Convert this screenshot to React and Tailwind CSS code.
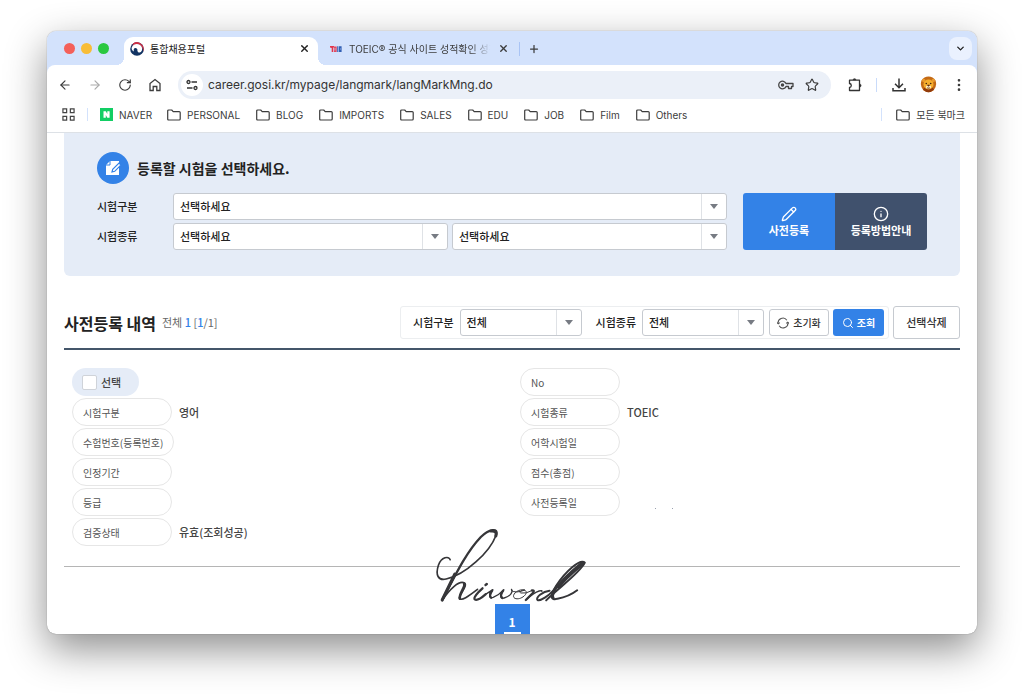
import { ArrowLeft, ArrowRight, RotateCw, Star, X, Plus, ChevronDown, Pencil, Info, Search, EllipsisVertical } from 'lucide-react'

const bookmarks = ['PERSONAL', 'BLOG', 'IMPORTS', 'SALES', 'EDU', 'JOB', 'Film', 'Others']

const leftRows = [
  { label: '시험구분', value: '영어' },
  { label: '수험번호(등록번호)' },
  { label: '인정기간' },
  { label: '등급' },
  { label: '검증상태', value: '유효(조회성공)' },
]

const rightRows = [
  { label: 'No' },
  { label: '시험종류', value: 'TOEIC' },
  { label: '어학시험일' },
  { label: '점수(총점)' },
  { label: '사전등록일', dots: true },
]

function FolderIcon() {
  return (
    <svg viewBox="0 0 14 12" className="w-[14px] h-3 shrink-0" fill="none" stroke="currentColor" strokeWidth="1.2" strokeLinejoin="round">
      <path d="M.7 10V2q0-1 1-1h3l1.500 1.600h6q1 0 1 1V10q0 1-1 1H1.700q-1 0-1-1z" />
    </svg>
  )
}

function HomeIcon() {
  return (
    <svg viewBox="0 0 14 14" className="w-[14px] h-[14px]" fill="none" stroke="currentColor" strokeWidth="1.300">
      <path d="M2 12.500V5.500L7 1.500l5 4v7H8.800V8.500H5.200v4z" />
    </svg>
  )
}

function TaegeukIcon() {
  return (
    <svg viewBox="0 0 14 14" className="w-[14px] h-[14px] shrink-0">
      <circle cx="7" cy="7" r="6.800" fill="#123463" />
      <path d="M3 1.500A6.800 6.800 0 0 1 13.300 9.500Q13 4 8.500 2.500Q5.500 1.500 2.500 4z" fill="#cf2e45" />
      <path d="M1.800 5.200Q4 1.200 8.500 2.200Q13 4 12 8.300Q10.800 11.300 8.200 10.200Q7 9 7.400 7.500Q7 5.700 5 6Q3 6.700 4 9.500Q1 8 1.800 5.200z" fill="#fff" />
    </svg>
  )
}

function ToeicIcon() {
  return (
    <svg viewBox="0 0 12 8" className="w-3 h-2 shrink-0">
      <path d="M0 1h4v1.500H3V7H1.700V3L0 2.500z" fill="#e2354b" />
      <path d="M3.700 1.500h3V7h-3z" fill="#df4a62" />
      <path d="M4.700 3h.6v2.500h-.6z" fill="#d3e2fc" />
      <path d="M7.200 1.200h1.200V7H7.200zM9 1.200h2.600V7H9z" fill="#315fb4" />
      <path d="M10.200 3h.6v2h-.6z" fill="#87a5dc" />
    </svg>
  )
}

function TuneIcon() {
  return (
    <svg viewBox="0 0 12 12" className="w-3 h-3" fill="none" stroke="#333" strokeWidth="1.300">
      <circle cx="2.500" cy="3" r="1.500" />
      <path d="M5.500 3H11M1 9h5.500" />
      <circle cx="9.500" cy="9" r="1.500" />
    </svg>
  )
}

function KeyIcon() {
  return (
    <svg viewBox="0 0 16 10" className="w-4 h-[10px]" fill="none" stroke="#444" strokeWidth="1.300" strokeLinejoin="round">
      <path d="M8 3.500A3.800 3.800 0 1 0 8 6.500h2.500v2h3v-2H15v-3z" />
      <circle cx="4.500" cy="5" r="1.100" fill="#444" />
    </svg>
  )
}

function PuzzleIcon() {
  return (
    <svg viewBox="0 0 16 16" className="w-4 h-4" fill="none" stroke="#333" strokeWidth="1.300" strokeLinejoin="round">
      <path d="M2.500 3.200h10v10.300h-10v-3q1.800-.3 1.800-2t-1.800-2z" />
      <path d="M6 3q0-1.500 1.500-1.500T9 3zM12.700 7q1.500 0 1.500 1.500t-1.500 1.500z" fill="#333" strokeWidth=".4" />
    </svg>
  )
}

function DownloadIcon() {
  return (
    <svg viewBox="0 0 16 16" className="w-4 h-4" fill="none" stroke="#333" strokeWidth="1.500">
      <path d="M8 1.500v9M4 6.700l4 4 4-4M2 11v2.700h12V11" />
    </svg>
  )
}

function LionIcon() {
  return (
    <svg viewBox="0 0 17 17" className="w-[17px] h-[17px]">
      <path d="M8.500.5Q13 .5 15.500 4.500Q17.500 10 13.500 14.500Q8.500 18 3.500 14.500Q-.5 10 1.500 4.500Q4 .5 8.500.5z" fill="#c46a16" />
      <path d="M3 13.500Q8.500 19 14 13.500L12 11H5z" fill="#923b0c" />
      <circle cx="3.700" cy="4.500" r="1.700" fill="#e99a2c" />
      <circle cx="13.300" cy="4.500" r="1.700" fill="#e99a2c" />
      <ellipse cx="8.500" cy="8.500" rx="5" ry="5" fill="#f5ae2d" />
      <ellipse cx="8.500" cy="11" rx="2.700" ry="1.800" fill="#fff0c8" />
      <circle cx="6.300" cy="7.500" r=".8" fill="#3d2410" />
      <circle cx="10.700" cy="7.500" r=".8" fill="#3d2410" />
      <path d="M7.300 9h2.400l-1.200 1.400zM7 11.800q1.500 1 3 0" fill="#5b2912" stroke="#5b2912" strokeWidth=".5" />
    </svg>
  )
}

function DocPenIcon() {
  return (
    <svg viewBox="0 0 16 16" className="w-4 h-4">
      <path d="M5 1h9v14H1V5z" fill="#fff" />
      <path d="M1 5h4V1" fill="none" stroke="#3382e7" strokeWidth="1" />
      <path d="M7 12l.7-2.700L14 3l2 2-6.300 6.300z" fill="#fff" stroke="#3382e7" strokeWidth="1.200" />
    </svg>
  )
}

function ResetIcon() {
  return (
    <svg viewBox="0 0 14 14" className="w-3 h-3" fill="none" stroke="#555" strokeWidth="1.200">
      <path d="M1.500 8A5.500 5.500 0 0 1 11.500 3.800M12.500 6A5.500 5.500 0 0 1 2.500 10.200" />
      <path d="M0 6.300L1.500 8 3.300 6.600M14 7.700L12.500 6 10.700 7.400" />
    </svg>
  )
}

function Signature() {
  return (
    <svg viewBox="45 20 465 231" className="absolute left-1/2 -translate-x-1/2 -top-10 w-[155px] h-[77px]" fill="none" stroke="#363639" strokeLinecap="round" strokeLinejoin="round" aria-hidden="true">
      <path strokeWidth="5" d="M92 118C88 106 66 110 57 134C47 164 56 182 80 176C137 164 211 95 229 46" />
      <path strokeWidth="7" d="M229 46C239 19 207 28 184 50C142 94 113 153 68 240" />
      <path strokeWidth="9" d="M214 32Q234 30 229 47M106 161L68 239" />
      <path strokeWidth="5" d="M70 237C90 208 119 178 135 188C145 195 123 217 120 231C121 248 153 223 174 207" />
      <path strokeWidth="8" d="M134 191C139 198 117 223 121 235" />
      <path strokeWidth="7" d="M189 204C174 217 161 232 166 237C173 242 190 229 198 222M198 194L202 191" />
      <path strokeWidth="4" d="M198 222L220 208C207 221 207 236 221 231C236 225 246 216 253 208C240 224 241 238 254 233C274 227 281 214 276 207" />
      <path strokeWidth="7" d="M218 211Q207 227 215 232M251 211Q239 227 249 233" />
      <path strokeWidth="3" d="M276 211Q289 220 316 209C294 204 273 226 286 234C303 241 328 220 318 211C309 205 296 216 304 218Q319 221 337 211" />
      <path strokeWidth="7" d="M337 210Q347 209 340 218L319 239" />
      <path strokeWidth="4" d="M322 236Q343 217 359 212Q369 209 367 213" />
      <path strokeWidth="6" d="M390 211C369 213 347 233 354 239C364 243 387 226 402 210" />
      <path strokeWidth="6" d="M380 240C418 202 480 159 496 127C482 113 437 155 411 195C389 229 394 241 414 235C438 231 459 221 473 210" />
      <path strokeWidth="12" d="M490 128C466 148 434 174 417 199" />
      <path strokeWidth="9" d="M415 194Q394 223 401 233" />
    </svg>
  )
}

function SelectBox({ id, label, option, className = '' }) {
  return (
    <div className={`relative h-[27px] ${className}`}>
      <select id={id} aria-label={label} className="block w-full h-full appearance-none rounded-[3px] border border-[#c6cad0] bg-white pl-[6px] pr-7 text-[11px] font-medium text-[#222]">
        <option>{option}</option>
      </select>
      <span className="pointer-events-none absolute inset-y-px right-px flex w-[25px] items-center justify-center border-l border-[#dfe2e6]">
        <span className="border-x-4 border-t-[5px] border-x-transparent border-t-[#777b83]" />
      </span>
    </div>
  )
}

function Row({ label, value, dots }) {
  return (
    <div className="flex h-7 items-center gap-[7px]">
      <dt className="flex h-7 min-w-[100px] items-center rounded-full border border-[#e6e6e6] px-[10px] text-[10px] text-[#555]">{label}</dt>
      <dd className="text-[11px] font-medium text-[#444]">
        {value}
        {dots && (
          <span className="flex gap-4 pl-7 pt-3">
            <i className="h-px w-px bg-gray-400" />
            <i className="h-px w-px bg-gray-400" />
          </span>
        )}
      </dd>
    </div>
  )
}

function BrowserChrome() {
  return (
    <header className="shrink-0 bg-[#d3e2fc] font-[Inter,'Noto_Sans_CJK_KR',sans-serif] text-[#3c3c3c]">
      <div className="flex h-[34px] items-end pr-[5px]">
        <div className="flex h-[34px] w-[77px] items-center gap-[6px] pl-[17px]">
          <span className="h-[11px] w-[11px] rounded-full bg-[#f4605a]" />
          <span className="h-[11px] w-[11px] rounded-full bg-[#f8bd37]" />
          <span className="h-[11px] w-[11px] rounded-full bg-[#2ac840]" />
        </div>
        <div className="relative flex h-7 w-[194px] items-center gap-[6px] rounded-t-[9px] bg-white pb-[5px] pl-[6px] pr-2">
          <span className="absolute -left-2 bottom-0 h-2 w-2 bg-[radial-gradient(circle_at_0_0,transparent_8px,white_8px)]" />
          <span className="absolute -right-2 bottom-0 h-2 w-2 bg-[radial-gradient(circle_at_100%_0,transparent_8px,white_8px)]" />
          <TaegeukIcon />
          <span className="flex-1 text-[10px] leading-4 text-[#222]">통합채용포털</span>
          <button aria-label="탭 닫기"><X className="h-[11px] w-[11px]" color="#222" strokeWidth={3} /></button>
        </div>
        <div className="flex h-7 items-center pb-[5px] pl-3">
          <ToeicIcon />
          <span className="ml-[7px] w-[149px] whitespace-nowrap text-[10px] leading-4 [mask-image:linear-gradient(to_right,black_82%,transparent_95%)]">TOEIC® 공식 사이트 성적확인 성적</span>
          <button aria-label="탭 닫기"><X className="h-[11px] w-[11px]" strokeWidth={3} /></button>
          <span className="ml-[10px] h-[14px] w-px bg-[#a9c4f5]" />
          <button aria-label="새 탭" className="ml-2"><Plus className="h-3 w-3" strokeWidth={2.5} /></button>
        </div>
        <button aria-label="탭 검색" className="mb-[5px] ml-auto flex h-[23px] w-[23px] items-center justify-center rounded-lg bg-[#eaf1fe]">
          <ChevronDown className="h-[11px] w-[11px]" color="#222" strokeWidth={3} />
        </button>
      </div>

      <div className="rounded-t-[8px] border-b border-[#dde1e6] bg-white">
        <div className="flex h-[39px] items-center pl-[11px] pr-[10px]">
          <div className="flex items-center gap-4">
            <button aria-label="뒤로"><ArrowLeft className="h-[14px] w-[14px]" /></button>
            <button aria-label="앞으로" className="text-[#aaa]"><ArrowRight className="h-[14px] w-[14px]" /></button>
            <button aria-label="새로고침"><RotateCw className="h-[14px] w-[14px]" /></button>
            <button aria-label="홈"><HomeIcon /></button>
          </div>
          <div className="ml-4 flex h-7 flex-1 items-center rounded-full bg-[#ebf0f8] pl-[3px] pr-3">
            <span className="flex h-[22px] w-[22px] items-center justify-center rounded-full bg-white"><TuneIcon /></span>
            <input aria-label="주소" readOnly value="career.gosi.kr/mypage/langmark/langMarkMng.do" className="ml-[5px] min-w-0 flex-1 bg-transparent text-[12px] text-[#333] outline-none" />
            <KeyIcon />
            <Star className="ml-[11px] h-[14px] w-[14px]" />
          </div>
          <div className="ml-4 flex items-center">
            <PuzzleIcon />
            <span className="ml-[13px] h-[14px] w-px bg-[#c9dbfa]" />
            <span className="ml-[14px]"><DownloadIcon /></span>
            <span className="ml-[13px]"><LionIcon /></span>
            <button aria-label="메뉴" className="ml-[14px]"><EllipsisVertical className="h-4 w-4" strokeWidth={2} /></button>
          </div>
        </div>
        <nav className="flex h-[28px] items-center pb-[7px] pl-[15px] pr-3 text-[10px] leading-4">
          <svg viewBox="0 0 14 14" className="h-[13px] w-[13px]" fill="none" stroke="#444" strokeWidth="1.300">
            <path d="M1 1h4v4H1zM9 1h4v4H9zM1 9h4v4H1zM9 9h4v4H9z" />
          </svg>
          <span className="ml-3 h-[13px] w-px bg-[#d3e2fc]" />
          <a href="#" className="ml-3 mr-[-1px] flex items-center gap-[6px]">
            <svg viewBox="0 0 13 13" className="h-[13px] w-[13px]">
              <path d="M0 0h13v13H0z" fill="#12ce64" />
              <path d="M3.500 3.300h2.300l1.500 2.600V3.300h2.300v6.400H7.300L5.800 7.100v2.600H3.500z" fill="#fff" />
            </svg>
            NAVER
          </a>
          {bookmarks.map((name) => (
            <a key={name} href="#" className="ml-4 flex items-center gap-[6px]">
              <FolderIcon />
              {name}
            </a>
          ))}
          <span className="ml-auto h-[13px] w-px bg-[#d3e2fc]" />
          <a href="#" className="ml-[14px] flex items-center gap-[6px]">
            <FolderIcon />
            모든 북마크
          </a>
        </nav>
      </div>
    </header>
  )
}

export default function App() {
  return (
    <div className="flex h-screen flex-col bg-white px-[47px] pb-[62px] pt-[31px] font-['Noto_Sans_CJK_KR',sans-serif]">
      <div className="flex min-h-0 flex-1 flex-col overflow-hidden rounded-[9px] bg-white shadow-[0_15px_40px_rgba(0,0,0,0.45),0_0_1px_rgba(0,0,0,0.5)]">
        <BrowserChrome />

        <main className="min-h-0 flex-1 overflow-hidden px-[17px]">
          {/* 시험 선택 */}
          <section className="rounded-b-md bg-[#e5ecf7] px-[33px] pb-[26px] pt-[19px]">
            <div className="flex items-center gap-2">
              <span className="flex h-8 w-8 items-center justify-center rounded-full bg-[#3382e7]"><DocPenIcon /></span>
              <h2 className="text-[14px] font-bold text-[#222]">등록할 시험을 선택하세요.</h2>
            </div>
            <div className="mt-[9px] flex gap-4">
              <div className="grid flex-1 grid-cols-[72px_1fr_1fr] items-center gap-x-1 gap-y-[3px]">
                <label htmlFor="kind" className="text-[11px] font-medium text-[#222]">시험구분</label>
                <SelectBox id="kind" option="선택하세요" className="col-span-2" />
                <label htmlFor="type" className="text-[11px] font-medium text-[#222]">시험종류</label>
                <SelectBox id="type" option="선택하세요" />
                <SelectBox label="시험종류 상세" option="선택하세요" />
              </div>
              <div className="flex overflow-hidden rounded-[3px] text-[11px] font-bold leading-4 text-white">
                <button className="flex w-[92px] flex-col items-center justify-center bg-[#3382e7]">
                  <Pencil className="h-4 w-4" strokeWidth={2} />
                  사전등록
                </button>
                <button className="flex w-[92px] flex-col items-center justify-center bg-[#40516d]">
                  <Info className="h-4 w-4" strokeWidth={2} />
                  등록방법안내
                </button>
              </div>
            </div>
          </section>

          {/* 사전등록 내역 */}
          <section className="mt-[30px]">
            <div className="flex items-center border-b-2 border-[#44566a] pb-[9px]">
              <h2 className="text-[16px] font-bold text-[#222]">사전등록 내역</h2>
              <p className="ml-[6px] text-[11px] text-[#666]">
                전체 <b className="font-medium text-[#3382e7]">1</b> [<b className="font-medium text-[#3382e7]">1</b>/1]
              </p>
              <div className="ml-auto flex items-center rounded-[3px] border border-[#eceef0] py-[2px] pl-3 pr-1 text-[11px] font-medium text-[#222]">
                <label htmlFor="fkind">시험구분</label>
                <SelectBox id="fkind" option="전체" className="ml-[6px] w-[122px]" />
                <label htmlFor="ftype" className="ml-[14px]">시험종류</label>
                <SelectBox id="ftype" option="전체" className="ml-[6px] w-[122px]" />
                <button className="ml-[5px] flex h-[27px] w-[60px] items-center justify-center gap-1 rounded-[3px] border border-[#c6cad0] text-[10px] text-[#333]">
                  <ResetIcon />
                  초기화
                </button>
                <button className="ml-1 flex h-[27px] w-[51px] items-center justify-center gap-[3px] rounded-[3px] bg-[#3382e7] text-[10px] font-bold text-white">
                  <Search className="h-3 w-3" />
                  조회
                </button>
              </div>
              <button className="ml-1 h-[33px] w-[67px] rounded-[3px] border border-[#c6cad0] text-[11px] font-medium text-[#333]">선택삭제</button>
            </div>

            <div className="grid grid-cols-2 border-b border-[#b5b5b5] pb-5 pt-[18px]">
              <div className="pl-2">
                <label className="flex h-7 w-[67px] items-center gap-1 rounded-full bg-[#e5ecf7] pl-[10px] text-[11px] font-medium text-[#444]">
                  <input type="checkbox" className="h-[15px] w-[15px] appearance-none rounded-[2px] border border-[#cfd3d9] bg-white" />
                  선택
                </label>
                <dl className="mt-[2px] space-y-[2px]">
                  {leftRows.map((row) => <Row key={row.label} {...row} />)}
                </dl>
              </div>
              <dl className="space-y-[2px] pl-2">
                {rightRows.map((row) => <Row key={row.label} {...row} />)}
              </dl>
            </div>
          </section>

          <nav className="relative flex justify-center pt-[37px]">
            <Signature />
            <a href="#" aria-current="page" className="flex h-9 w-[35px] justify-center bg-[#3382e7] pt-2 text-[12px] font-bold leading-5 text-white">
              <span className="h-[22px] w-[17px] border-b-2 border-white text-center">1</span>
            </a>
          </nav>
        </main>
      </div>
    </div>
  )
}
